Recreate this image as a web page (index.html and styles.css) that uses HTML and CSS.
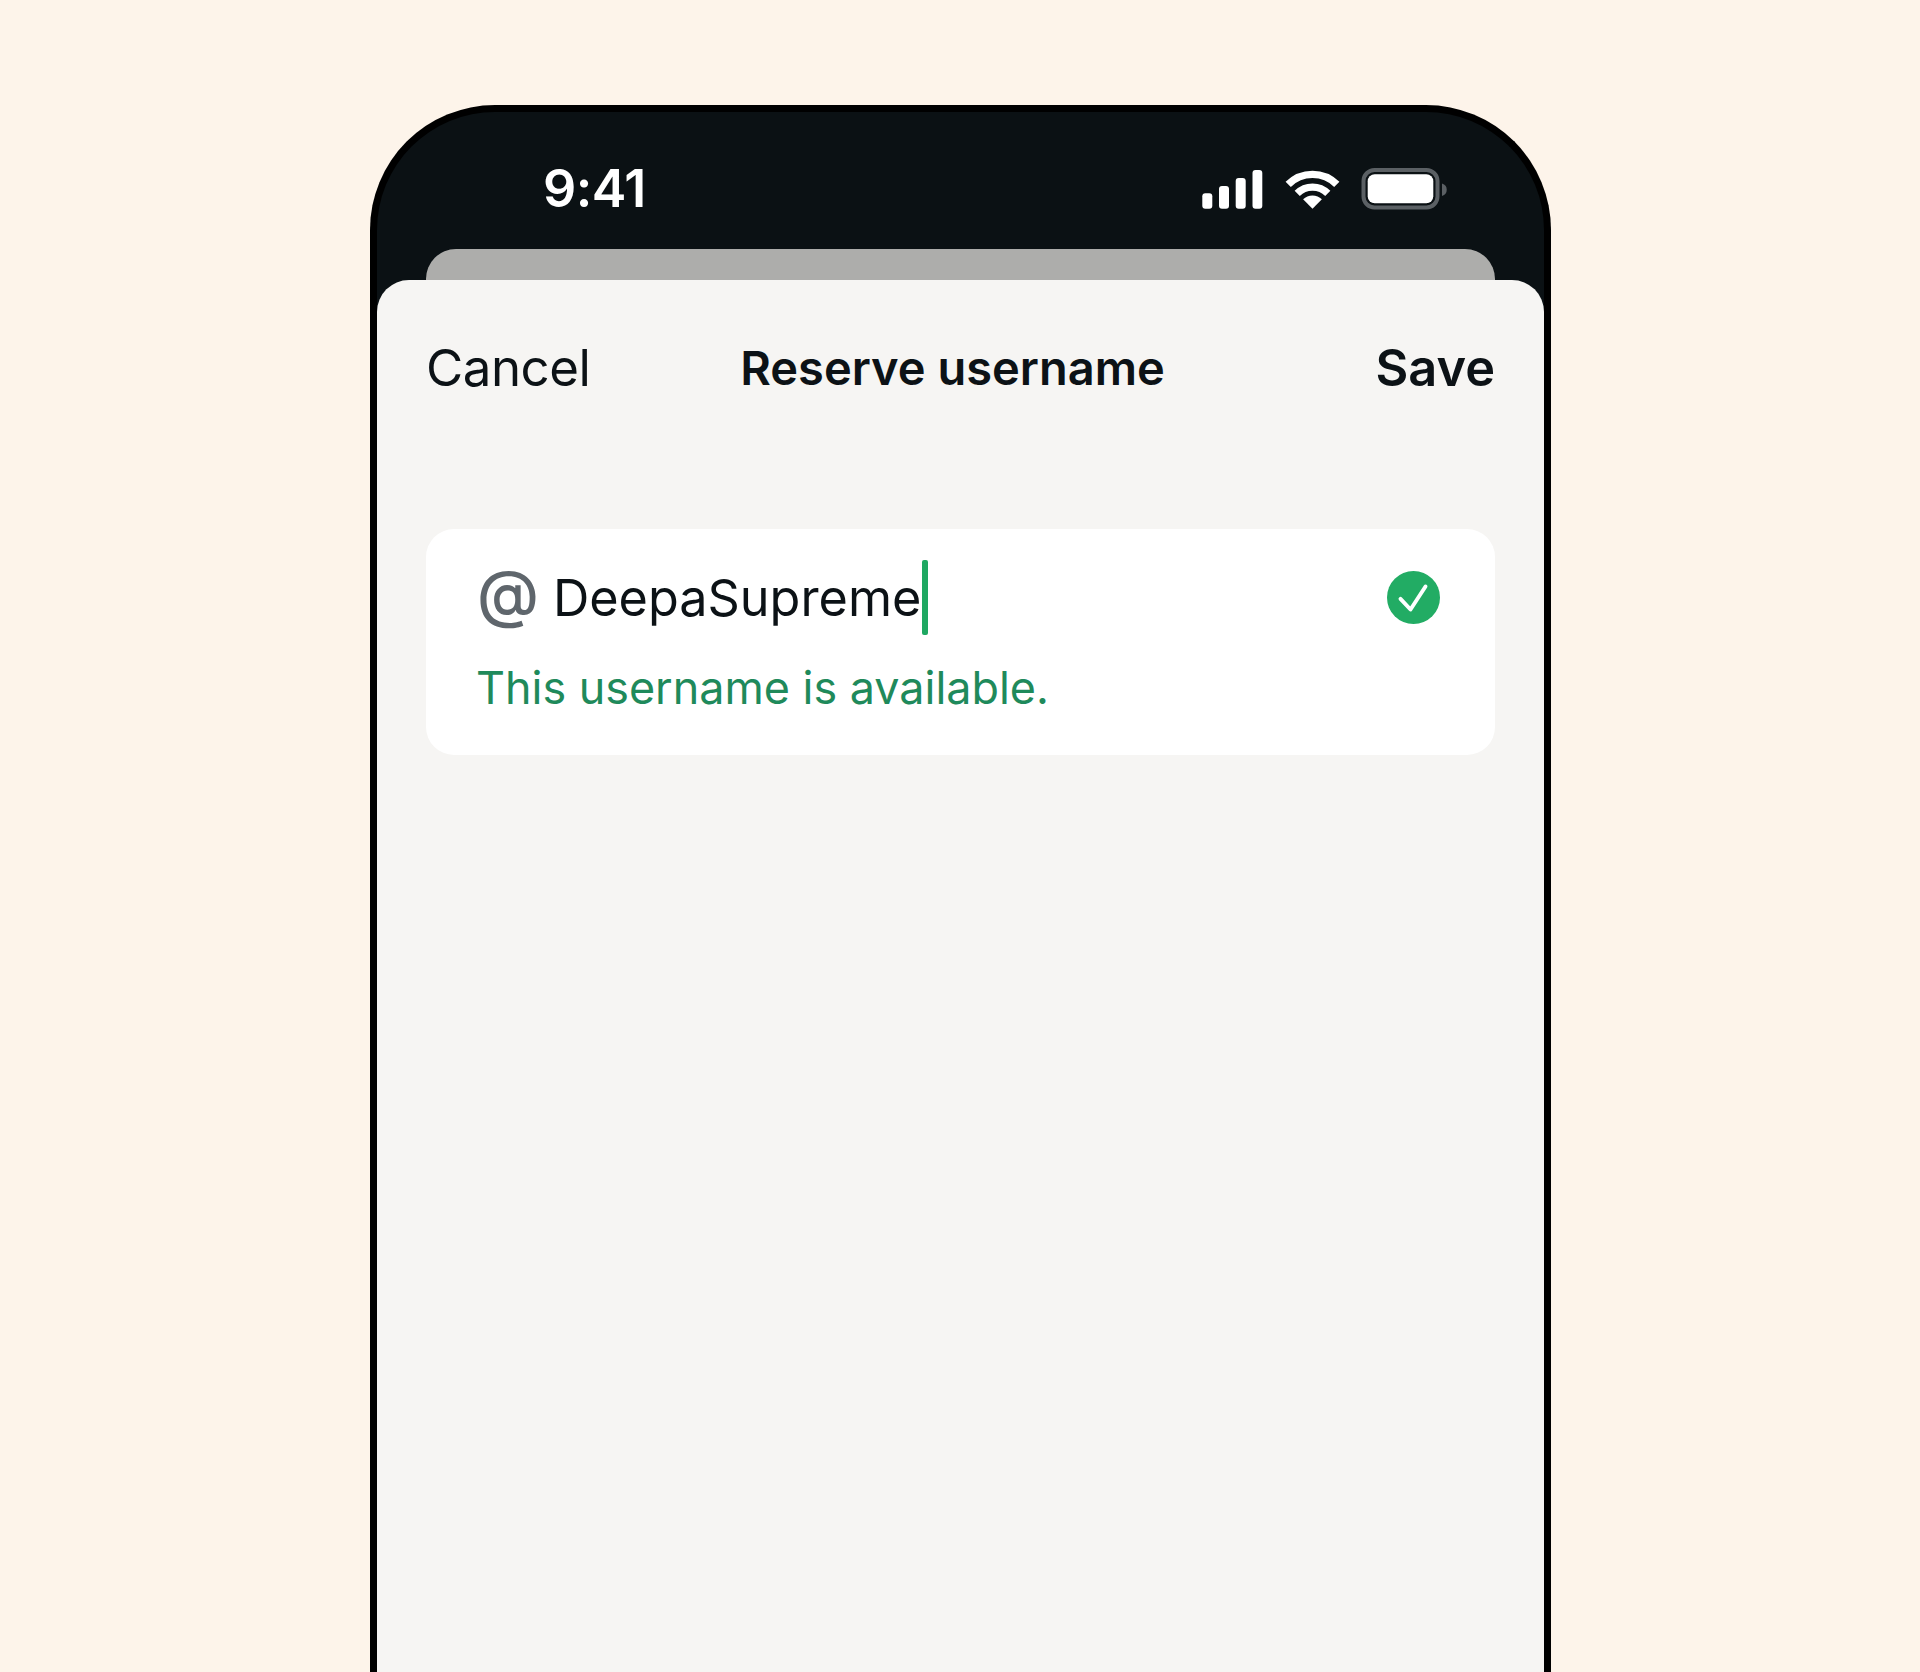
FILE: index.html
```html
<!DOCTYPE html>
<html lang="en">
<head>
<meta charset="utf-8">
<title>Reserve username</title>
<link rel="stylesheet" href="styles.css">
</head>
<body>
<main class="phone">
  <div class="status">
    <span class="time">9:41</span>
    <svg class="status-icons" viewBox="1200 166 250 46" width="250" height="46" aria-hidden="true">
      <g fill="#fff">
        <rect x="1202.3" y="193.3" width="10" height="15.4" rx="3"/>
        <rect x="1219" y="186" width="10" height="22.7" rx="3"/>
        <rect x="1235.7" y="178" width="10" height="30.7" rx="3"/>
        <rect x="1252.5" y="170" width="9.8" height="38.7" rx="3"/>
      </g>
      <g transform="translate(1312.5 208.7)" fill="none" stroke="#fff">
        <path d="M-24.3 -24.3A34.4 34.4 0 0 1 24.3 -24.3" stroke-width="7.4"/>
        <path d="M-15.3 -15.3A21.7 21.7 0 0 1 15.3 -15.3" stroke-width="7.3"/>
        <path d="M0 0L-9.4 -9.4A13.3 13.3 0 0 1 9.4 -9.4Z" fill="#fff" stroke="none"/>
      </g>
      <rect x="1363.5" y="170" width="74" height="37.5" rx="11" fill="none" stroke="#5b6064" stroke-width="4"/>
      <rect x="1367.7" y="174.3" width="65.6" height="29" rx="7" fill="#fff"/>
      <path d="M1442 183.5a6.5 6.5 0 0 1 0 12.5z" fill="#5b6064"/>
    </svg>
  </div>
  <div class="peek"></div>
  <section class="sheet">
    <header class="nav">
      <span class="cancel">Cancel</span>
      <h1 class="title">Reserve username</h1>
      <span class="save">Save</span>
    </header>
    <div class="card">
      <div class="field">
        <span class="at">@</span>
        <span class="value">DeepaSupreme</span>
        <span class="caret"></span>
        <svg class="check" viewBox="0 0 53 53" width="53" height="53" aria-hidden="true">
          <circle cx="26.5" cy="26.5" r="26.5" fill="#22ac64"/>
          <path d="M13.5 27.8L23.5 38.5L38.5 15.5" fill="none" stroke="#fff" stroke-width="3.9" stroke-linecap="round" stroke-linejoin="round"/>
        </svg>
      </div>
      <p class="hint">This username is available.</p>
    </div>
  </section>
</main>
</body>
</html>
```

FILE: styles.css
```css
html, body {
  margin: 0;
  padding: 0;
  height: 1672px;
  overflow: hidden;
  background: #fdf4ea;
  font-family: Inter, "Liberation Sans", sans-serif;
}

.phone {
  box-sizing: border-box;
  width: 1181px;
  height: 1567px;
  margin: 105px 0 0 370px;
  border: 7px solid #000;
  border-bottom: 0;
  border-radius: 125px 125px 0 0;
  background: #0b1114;
  display: flex;
  flex-direction: column;
}

.status {
  height: 137px;
  display: flex;
  align-items: flex-start;
  justify-content: space-between;
  flex: none;
}

.time {
  margin: 46px 0 0 166px;
  font-size: 52px;
  line-height: 62px;
  font-weight: 600;
  color: #fff;
  letter-spacing: -0.5px;
}

.status-icons {
  margin: 54px 94px 0 0;
  display: block;
}

.peek {
  flex: none;
  height: 31px;
  margin: 0 49px;
  background: #adadab;
  border-radius: 30px 30px 0 0;
}

.sheet {
  flex: 1;
  background: #f6f5f3;
  border-radius: 32px 32px 0 0;
  padding: 0 49px;
}

.nav {
  height: 178px;
  display: flex;
  align-items: center;
  padding-bottom: 4px;
  box-sizing: border-box;
  color: #0c1216;
  font-size: 50px;
}

.cancel {
  font-size: 51px;
  font-weight: 400;
  letter-spacing: -0.5px;
}

.title {
  margin: 0 0 0 150px;
  font-size: 47px;
  font-weight: 600;
}

.save {
  margin-left: auto;
  font-size: 50.5px;
  font-weight: 600;
}

.card {
  margin-top: 71px;
  height: 226px;
  box-sizing: border-box;
  background: #fff;
  border-radius: 28px;
  padding: 31px 55px 0 50px;
}

.field {
  display: flex;
  align-items: center;
  height: 75px;
}

.at {
  margin: 0 0 9px 1px;
  font-size: 63px;
  line-height: 66px;
  color: #5f666c;
  font-weight: 500;
}

.value {
  margin-left: 14px;
  font-size: 50.35px;
  color: #0c1216;
}

.caret {
  width: 6px;
  height: 75px;
  margin-left: 1px;
  border-radius: 2px;
  background: #1fa862;
}

.check {
  margin-left: auto;
  display: block;
}

.hint {
  margin: 26px 0 0;
  font-size: 44.9px;
  line-height: 54px;
  color: #1f8a5b;
}
```
